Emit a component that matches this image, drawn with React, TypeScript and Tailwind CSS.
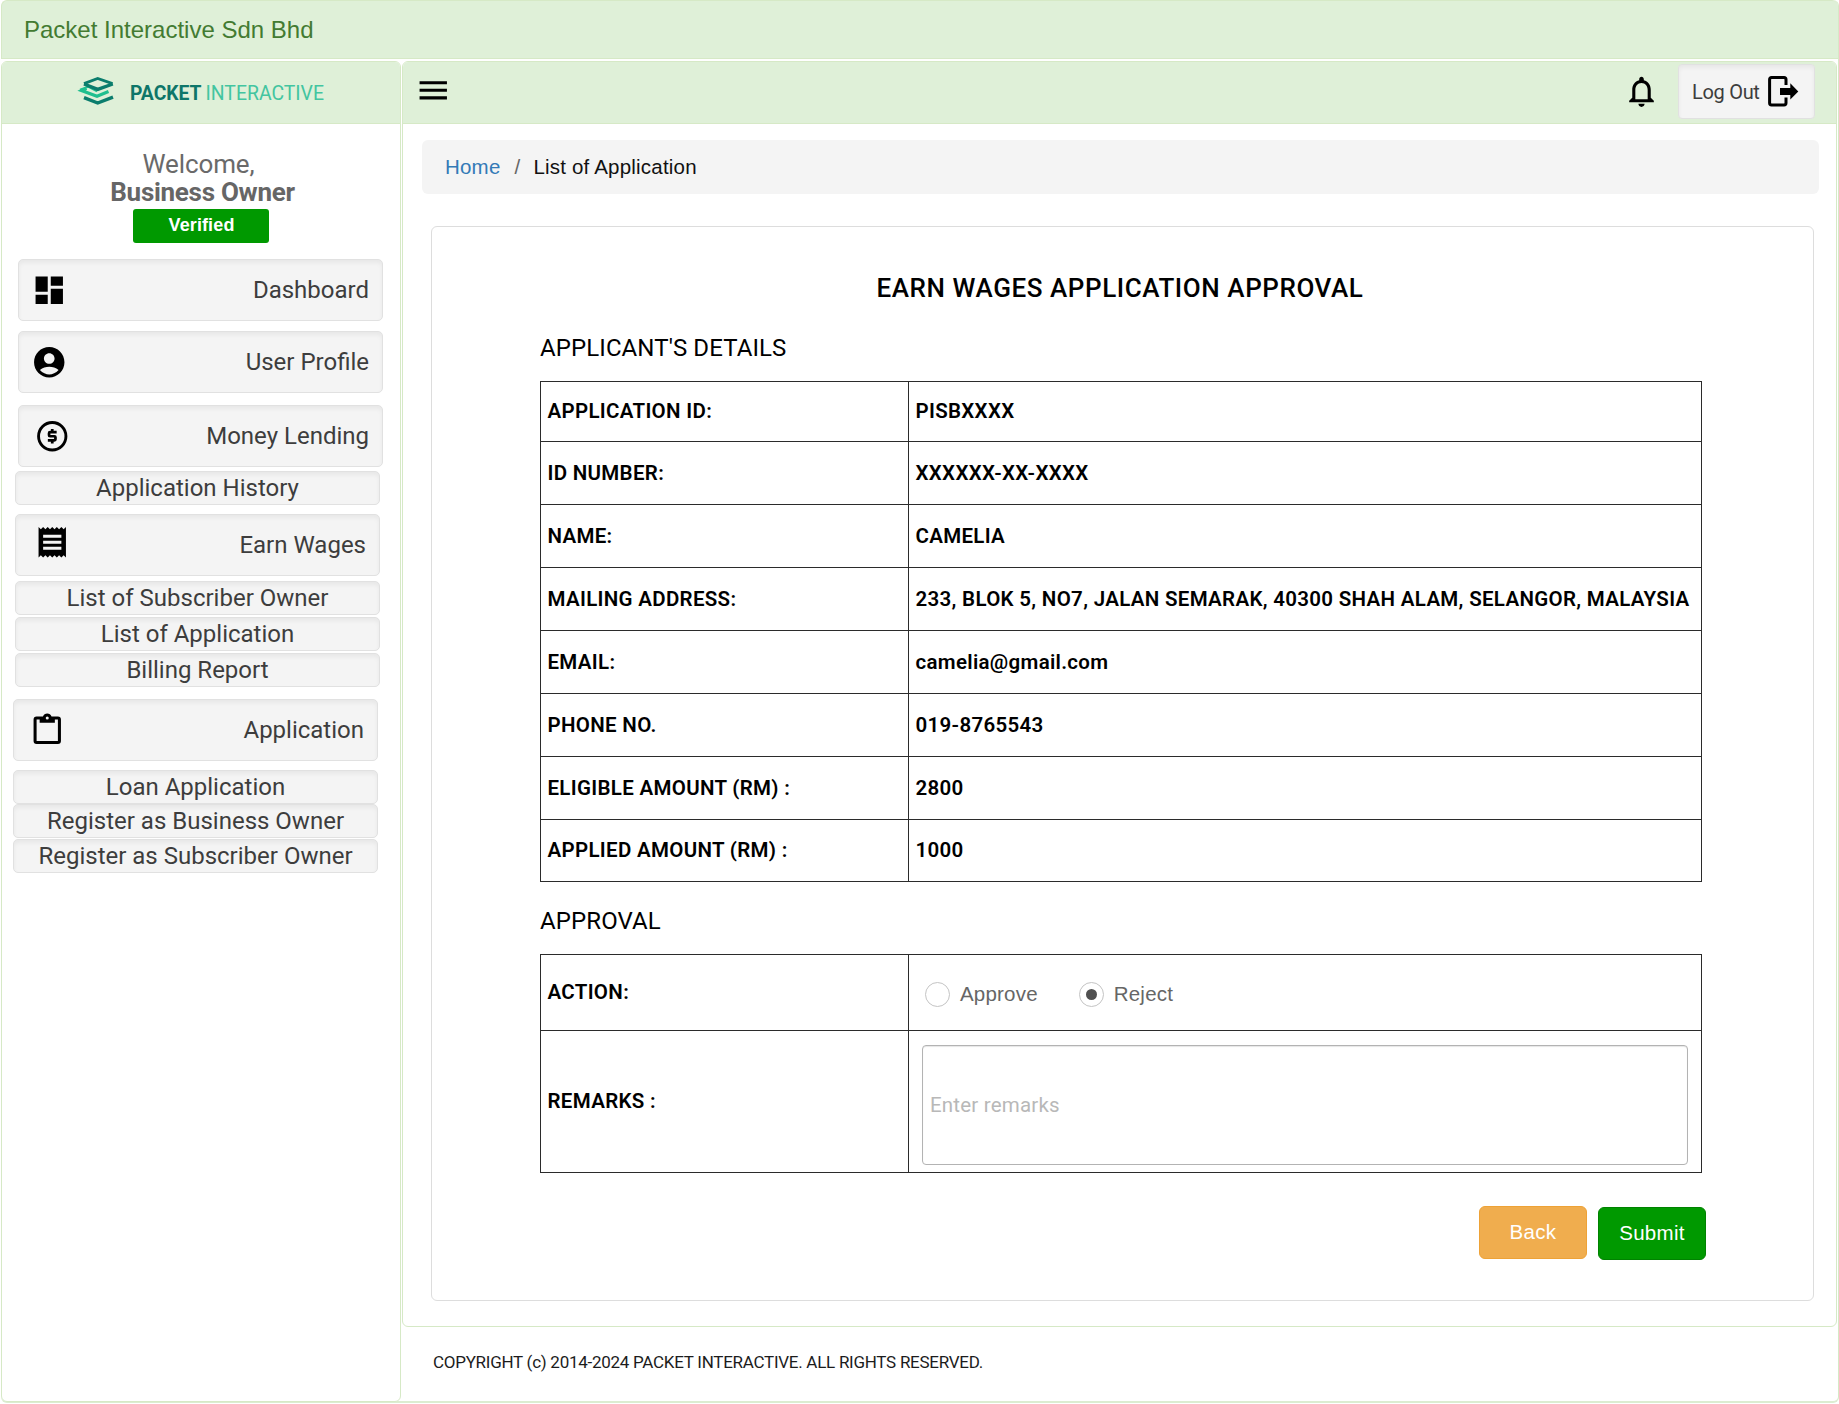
import type { ReactNode } from "react";
import { MdAccountCircle, MdDashboard, MdMenu, MdNotificationsNone, MdReceipt } from "react-icons/md";

const buttonSkin =
  "border border-[#e1e1e1] bg-[#f4f4f4] text-[#3d3d3d] shadow-[inset_0_3px_4px_rgba(0,0,0,0.05)]";

function Logo() {
  return (
    <svg width="262" height="34" viewBox="0 0 262 34" className="block overflow-visible">
      <g fill="none">
        <path d="M7.5 14.2L2.5 16.6L18 22.2L29.5 17.6" stroke="#1fbf8f" strokeWidth="3.2" />
        <path d="M1 15.6L9 12.8L18 17.4" stroke="#1fbf8f" strokeWidth="1.8" />
        <path d="M5 9.6L18.7 4.4L33.5 9.6" stroke="#0b7d6d" strokeWidth="2.8" />
        <path d="M5 10L18.7 15.4L33.8 10" stroke="#0b7d6d" strokeWidth="3.4" />
        <path d="M5 23.6L18.7 29L34 23.2" stroke="#0b7d6d" strokeWidth="3.4" />
      </g>
      <text x="51" y="26" fill="#0e7669" fontFamily="Roboto, sans-serif" fontSize="21" fontWeight="700" textLength="71.5" lengthAdjust="spacingAndGlyphs">
        PACKET
      </text>
      <text x="126.5" y="26" fill="#43c5a0" fontFamily="Roboto, sans-serif" fontSize="21" fontWeight="400" textLength="118.5" lengthAdjust="spacingAndGlyphs">
        INTERACTIVE
      </text>
    </svg>
  );
}

function CoinIcon({ className }: { className: string }) {
  return (
    <svg width="36.5" height="36.5" viewBox="0 0 24 24" fill="none" stroke="#000" className={className}>
      <circle cx="12" cy="12" r="9" strokeWidth="1.9" />
      <path d="M14.9 9.3H10.6Q9.9 9.3 9.9 10V11.3Q9.9 12 10.6 12H13.4Q14.1 12 14.1 12.7V14Q14.1 14.7 13.4 14.7H9.1M12 7.3V9.3M12 14.7V16.7" strokeWidth="1.8" />
    </svg>
  );
}

function ClipboardIcon({ className }: { className: string }) {
  return (
    <svg width="36.5" height="36.5" viewBox="0 0 24 24" fill="#000" className={className}>
      <path d="M19 3h-4.18C14.4 1.84 13.3 1 12 1s-2.4.84-2.82 2H5a2 2 0 0 0-2 2v14a2 2 0 0 0 2 2h14a2 2 0 0 0 2-2V5a2 2 0 0 0-2-2m-7 0a1 1 0 0 1 1 1 1 1 0 0 1-1 1 1 1 0 0 1-1-1 1 1 0 0 1 1-1M7 7h10V5h2v14H5V5h2z" />
    </svg>
  );
}

function LogoutIcon() {
  return (
    <svg width="31" height="31" viewBox="0 0 31 31" className="block">
      <path d="M18 9V3.5Q18 1.6 16.1 1.6H3.5Q1.6 1.6 1.6 3.5V27Q1.6 28.9 3.5 28.9H16.1Q18 28.9 18 27V21.5" fill="none" stroke="#000" strokeWidth="3" />
      <path d="M12 11.9H22.3V7.2L30.3 15.4L22.3 23.4V18.9H12Z" fill="#000" />
    </svg>
  );
}

function MenuItem({ icon, label, className }: { icon: ReactNode; label: string; className: string }) {
  return (
    <a className={`${buttonSkin} flex h-[62px] w-[365px] items-center justify-between rounded-[5px] pr-[13px] text-[24px] ${className}`}>
      {icon}
      <span>{label}</span>
    </a>
  );
}

function SubItem({ label, className }: { label: string; className: string }) {
  return (
    <a className={`${buttonSkin} flex h-[34px] w-[365px] items-center justify-center rounded-[5px] text-[24px] leading-none ${className}`}>
      {label}
    </a>
  );
}

function Sidebar() {
  return (
    <aside className="flex h-[1341px] w-[400px] flex-col rounded-[6px] border border-[#d6e9c6] bg-white">
      <div className="flex h-[62px] shrink-0 items-center rounded-t-[5px] border-b border-[#d6e9c6] bg-[#dff0d8] pb-[3px] pl-[77px]">
        <Logo />
      </div>
      <div className="mt-[26px] h-[28px] w-[393px] text-center text-[26px] leading-[28px] tracking-[-0.1px] text-[#6a6a6a]">Welcome,</div>
      <div className="h-[28px] w-[401px] text-center text-[26px] leading-[28px] font-bold tracking-[-0.28px] text-[#666666]">Business Owner</div>
      <div className="mt-[3px] ml-[131px] flex h-[34px] w-[136px] items-center justify-center rounded-[3px] bg-[#009900] pb-[2px] pl-px font-['Liberation_Sans',sans-serif] text-[18px] font-bold tracking-[0.12px] text-white">
        Verified
      </div>
      <nav className="flex flex-col">
        <MenuItem className="mt-[16px] ml-[16px]" label="Dashboard" icon={<MdDashboard size={36.5} className="ml-[12px] text-black" />} />
        <MenuItem className="mt-[10px] ml-[16px]" label="User Profile" icon={<MdAccountCircle size={36.5} className="ml-[12px] text-black" />} />
        <MenuItem className="mt-[12px] ml-[16px]" label="Money Lending" icon={<CoinIcon className="ml-[15px]" />} />
        <SubItem className="mt-[4px] ml-[13px]" label="Application History" />
        <MenuItem className="mt-[9px] ml-[13px]" label="Earn Wages" icon={<MdReceipt size={36.5} className="mb-[5px] ml-[18px] text-black" />} />
        <SubItem className="mt-[5px] ml-[13px]" label="List of Subscriber Owner" />
        <SubItem className="mt-[2px] ml-[13px]" label="List of Application" />
        <SubItem className="mt-[2px] ml-[13px]" label="Billing Report" />
        <MenuItem className="mt-[12px] ml-[11px]" label="Application" icon={<ClipboardIcon className="ml-[15px]" />} />
        <SubItem className="mt-[9px] ml-[11px]" label="Loan Application" />
        <SubItem className="ml-[11px]" label="Register as Business Owner" />
        <SubItem className="mt-px ml-[11px]" label="Register as Subscriber Owner" />
      </nav>
    </aside>
  );
}

const details = [
  { label: "APPLICATION ID:", value: "PISBXXXX", height: "h-[60px]" },
  { label: "ID NUMBER:", value: "XXXXXX-XX-XXXX", height: "h-[63px]" },
  { label: "NAME:", value: "CAMELIA", height: "h-[63px]" },
  { label: "MAILING ADDRESS:", value: "233, BLOK 5, NO7, JALAN SEMARAK, 40300 SHAH ALAM, SELANGOR, MALAYSIA", height: "h-[63px]" },
  { label: "EMAIL:", value: "camelia@gmail.com", height: "h-[63px]" },
  { label: "PHONE NO.", value: "019-8765543", height: "h-[63px]" },
  { label: "ELIGIBLE AMOUNT (RM) :", value: "2800", height: "h-[63px]" },
  { label: "APPLIED AMOUNT (RM) :", value: "1000", height: "h-[62px]" },
];

function Row({ label, height, children }: { label: string; height: string; children: ReactNode }) {
  return (
    <div className={`flex border-b border-[#2b2b2b] ${height}`}>
      <div className="flex w-[368px] shrink-0 items-center border-r border-[#2b2b2b] pl-[6.5px] text-[20.5px] font-semibold tracking-[0.31px] text-black">{label}</div>
      <div className="flex min-w-0 flex-1 items-center">{children}</div>
    </div>
  );
}

function Radio({ label, checked, className }: { label: string; checked?: boolean; className: string }) {
  return (
    <label className={`flex items-center gap-[10px] ${className}`}>
      <span className="flex size-[25px] items-center justify-center rounded-full border border-[#c4c4c4] bg-white">
        {checked && <span className="size-[11px] rounded-full bg-[#505050]" />}
      </span>
      <span className="text-[20.5px] tracking-[0.2px] text-[#666666]">{label}</span>
    </label>
  );
}

function ApprovalCard() {
  return (
    <section className="mt-[32px] ml-[28px] h-[1075px] w-[1383px] rounded-[6px] border border-[#dddddd] bg-white pl-[108px] font-['Roboto',sans-serif] text-black">
      <h1 className="mt-[45px] w-[1160px] text-center text-[26px] leading-[32px] font-medium tracking-[0.57px]">EARN WAGES APPLICATION APPROVAL</h1>
      <h2 className="mt-[28px] h-[32px] text-[24px] leading-[32px] font-normal tracking-[0.1px]">APPLICANT&apos;S DETAILS</h2>
      <div className="mt-[17px] w-[1162px] border-x border-t border-[#2b2b2b]">
        {details.map((row) => (
          <Row key={row.label} label={row.label} height={row.height}>
            <span className="pl-[6.5px] text-[20.5px] font-semibold tracking-[0.31px] whitespace-nowrap">{row.value}</span>
          </Row>
        ))}
      </div>
      <h2 className="mt-[23px] h-[32px] text-[24px] leading-[32px] font-normal tracking-[0.1px]">APPROVAL</h2>
      <div className="mt-[17px] w-[1162px] border-x border-t border-[#2b2b2b]">
        <Row label="ACTION:" height="h-[76px]">
          <div className="flex pt-[4px] font-['Liberation_Sans',sans-serif]">
            <Radio label="Approve" className="ml-[16px]" />
            <Radio label="Reject" checked className="ml-[41px]" />
          </div>
        </Row>
        <Row label="REMARKS :" height="h-[142px]">
          <div className="mt-[7px] ml-[13px] flex h-[120px] w-[766px] items-center rounded-[4px] border border-[#b3b3b3] pl-[7px] text-[20.5px] tracking-[0.2px] text-[#b8b8b8] shadow-[inset_0_1px_1px_rgba(0,0,0,0.1)]">
            Enter remarks
          </div>
        </Row>
      </div>
      <div className="mt-[33px] ml-[939px] flex gap-[11px] font-['Liberation_Sans',sans-serif] text-[20.5px] tracking-[0.3px] text-white">
        <button className="h-[53px] w-[108px] rounded-[6px] border border-[#eea236] bg-[#f0ad4e]">Back</button>
        <button className="mt-px h-[53px] w-[108px] rounded-[6px] border border-[#008200] bg-[#009900]">Submit</button>
      </div>
    </section>
  );
}

export default function App() {
  return (
    <div className="h-[1404px] w-[1839px] overflow-hidden bg-white pl-px font-['Roboto',sans-serif]">
      <div className="h-[1403px] w-[1838px] rounded-[6px] border-r border-b-2 border-r-[#d6e9c6] border-b-[#dcecd1] bg-white">
        <div className="flex h-[59px] items-center rounded-t-[6px] border border-r-0 border-[#d6e9c6] bg-[#dff0d8] pl-[22px] font-['Liberation_Sans',sans-serif] text-[24px] text-[#437b32]">
          Packet Interactive Sdn Bhd
        </div>
        <div className="mt-[2px] flex gap-px">
          <Sidebar />
          <div className="flex w-[1435px] flex-col">
            <main className="h-[1266px] rounded-[6px] border border-[#d6e9c6]">
              <header className="flex h-[62px] items-center rounded-t-[5px] border-b border-[#d6e9c6] bg-[#dff0d8] pr-[21px] pl-[12px]">
                <MdMenu size={36.5} className="mt-[-4px] text-black" />
                <MdNotificationsNone size={37} className="mt-[-3px] ml-auto text-black" />
                <button className={`${buttonSkin} mt-[-2px] ml-[18px] flex h-[55px] w-[137px] items-center rounded-[4px] pl-[13px] text-[20px]`}>
                  <span className="w-[76px] text-left tracking-[-0.3px]">Log Out</span>
                  <LogoutIcon />
                </button>
              </header>
              <nav className="mt-[16px] ml-[19px] flex h-[54px] w-[1397px] items-center rounded-[6px] bg-[#f4f4f4] pt-px font-['Liberation_Sans',sans-serif] text-[20.5px] tracking-[0.2px]">
                <a className="ml-[23px] text-[#337ab7]">Home</a>
                <span className="ml-[14px] text-[#666666]">/</span>
                <span className="ml-[13px] text-[#111111]">List of Application</span>
              </nav>
              <ApprovalCard />
            </main>
            <footer className="mt-[24px] pl-[31px] text-[17px] leading-[22px] tracking-[-0.27px] text-[#1c1c1c]">
              COPYRIGHT (c) 2014-2024 PACKET INTERACTIVE. ALL RIGHTS RESERVED.
            </footer>
          </div>
        </div>
      </div>
    </div>
  );
}
